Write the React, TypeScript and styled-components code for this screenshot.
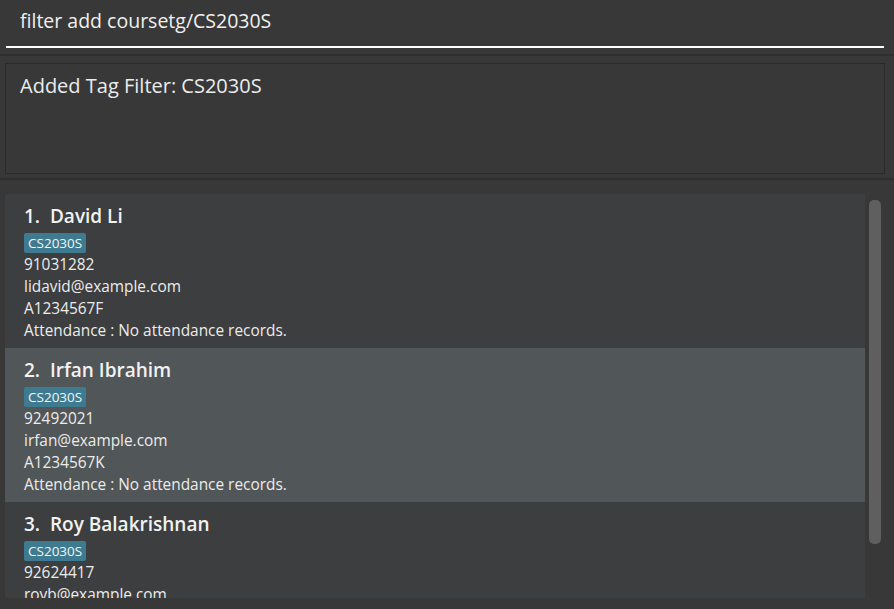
import React from "react";
import styled, { createGlobalStyle } from "styled-components";

const GlobalStyle = createGlobalStyle`
  html, body {
    margin: 0;
    padding: 0;
    background: #383838;
  }
  * {
    box-sizing: border-box;
  }
`;

const Window = styled.div`
  display: flex;
  flex-direction: column;
  width: 894px;
  height: 609px;
  overflow: hidden;
  background-color: #383838;
  font-family: "Open Sans", "Noto Sans", sans-serif;
  color: #ececec;
`;

const CommandBox = styled.div`
  height: 56px;
  padding: 0 10px 0 6px;
  border-bottom: 2px solid #2e2e2e;
`;

const CommandInput = styled.div`
  height: 48px;
  padding: 7px 0 0 14px;
  font-size: 19.5px;
  color: #f0f0f0;
  border-bottom: 2px solid #ffffff;
`;

const ResultPane = styled.div`
  height: 124px;
  padding: 7px 9px 0 5px;
  border-bottom: 2px solid #2e2e2e;
`;

const ResultBox = styled.div`
  height: 111px;
  border: 1px solid #2a2a2a;
  padding: 8px 14px;
  font-size: 20px;
  color: #ececec;
`;

const ListPane = styled.div`
  flex: 1;
  display: flex;
  gap: 4px;
  padding: 14px 0 0 5px;
  min-height: 0;
`;

const List = styled.div`
  width: 860px;
  height: 404px;
  overflow: hidden;
  display: flex;
  flex-direction: column;
`;

const Card = styled.div<{ $odd?: boolean }>`
  flex-shrink: 0;
  height: 154px;
  padding: 8px 19px 0;
  background-color: ${(p) => (p.$odd ? "#515658" : "#3c3e3f")};
  display: flex;
  flex-direction: column;
`;

const Name = styled.div`
  font-size: 19px;
  font-weight: 600;
  line-height: 28px;
  color: #f2f2f2;
  white-space: pre;
`;

const Tags = styled.div`
  display: flex;
  gap: 4px;
  margin: 3px 0 1px;
`;

const Tag = styled.span`
  background-color: #3e7b91;
  color: #f4f4f4;
  font-size: 13.5px;
  line-height: 20px;
  padding: 0 4px;
  border-radius: 2px;
`;

const Field = styled.div`
  font-size: 15.4px;
  line-height: 22px;
  color: #ececec;
`;

const Scrollbar = styled.div`
  width: 12px;
  padding-top: 6px;
`;

const Thumb = styled.div`
  width: 12px;
  height: 344px;
  border-radius: 5px;
  background-color: #5f5f5f;
`;

type Person = {
  name: string;
  tag: string;
  phone: string;
  email: string;
  id: string;
  attendance: string;
};

const people: Person[] = [
  {
    name: "David Li",
    tag: "CS2030S",
    phone: "91031282",
    email: "lidavid@example.com",
    id: "A1234567F",
    attendance: "No attendance records.",
  },
  {
    name: "Irfan Ibrahim",
    tag: "CS2030S",
    phone: "92492021",
    email: "irfan@example.com",
    id: "A1234567K",
    attendance: "No attendance records.",
  },
  {
    name: "Roy Balakrishnan",
    tag: "CS2030S",
    phone: "92624417",
    email: "royb@example.com",
    id: "A1234567R",
    attendance: "No attendance records.",
  },
];

const App: React.FC = () => {
  return (
    <Window>
      <GlobalStyle />
      <CommandBox>
        <CommandInput>filter add coursetg/CS2030S</CommandInput>
      </CommandBox>
      <ResultPane>
        <ResultBox>Added Tag Filter: CS2030S</ResultBox>
      </ResultPane>
      <ListPane>
        <List>
          {people.map((p, i) => (
            <Card key={p.name} $odd={i % 2 === 1}>
              <Name>{`${i + 1}.  ${p.name}`}</Name>
              <Tags>
                <Tag>{p.tag}</Tag>
              </Tags>
              <Field>{p.phone}</Field>
              <Field>{p.email}</Field>
              <Field>{p.id}</Field>
              <Field>Attendance : {p.attendance}</Field>
            </Card>
          ))}
        </List>
        <Scrollbar>
          <Thumb />
        </Scrollbar>
      </ListPane>
    </Window>
  );
};

export default App;
